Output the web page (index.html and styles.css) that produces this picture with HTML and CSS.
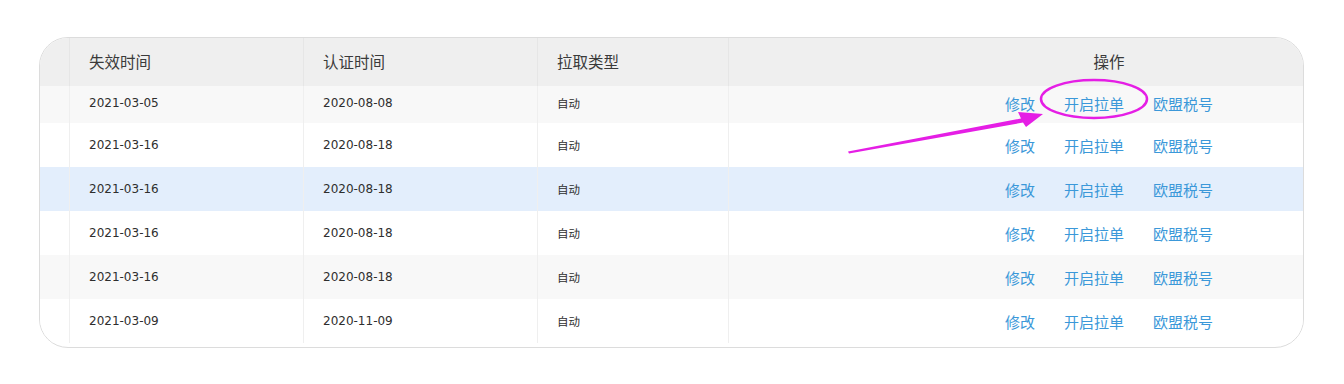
FILE: index.html
```html
<!DOCTYPE html>
<html lang="zh-CN">
<head>
<meta charset="utf-8">
<title>拉单列表</title>
<link rel="stylesheet" href="styles.css">
</head>
<body>
<div class="stage">
  <div class="card">
    <div class="row head">
      <div class="cell sel"></div>
      <div class="cell">失效时间</div>
      <div class="cell">认证时间</div>
      <div class="cell">拉取类型</div>
      <div class="cell ops">操作</div>
    </div>
    <div class="row r1 alt">
      <div class="cell sel"></div>
      <div class="cell">2021-03-05</div>
      <div class="cell">2020-08-08</div>
      <div class="cell type">自动</div>
      <div class="cell ops"><a>修改</a><a>开启拉单</a><a>欧盟税号</a></div>
    </div>
    <div class="row">
      <div class="cell sel"></div>
      <div class="cell">2021-03-16</div>
      <div class="cell">2020-08-18</div>
      <div class="cell type">自动</div>
      <div class="cell ops"><a>修改</a><a>开启拉单</a><a>欧盟税号</a></div>
    </div>
    <div class="row hover">
      <div class="cell sel"></div>
      <div class="cell">2021-03-16</div>
      <div class="cell">2020-08-18</div>
      <div class="cell type">自动</div>
      <div class="cell ops"><a>修改</a><a>开启拉单</a><a>欧盟税号</a></div>
    </div>
    <div class="row">
      <div class="cell sel"></div>
      <div class="cell">2021-03-16</div>
      <div class="cell">2020-08-18</div>
      <div class="cell type">自动</div>
      <div class="cell ops"><a>修改</a><a>开启拉单</a><a>欧盟税号</a></div>
    </div>
    <div class="row alt">
      <div class="cell sel"></div>
      <div class="cell">2021-03-16</div>
      <div class="cell">2020-08-18</div>
      <div class="cell type">自动</div>
      <div class="cell ops"><a>修改</a><a>开启拉单</a><a>欧盟税号</a></div>
    </div>
    <div class="row">
      <div class="cell sel"></div>
      <div class="cell">2021-03-09</div>
      <div class="cell">2020-11-09</div>
      <div class="cell type">自动</div>
      <div class="cell ops"><a>修改</a><a>开启拉单</a><a>欧盟税号</a></div>
    </div>
  </div>
  <svg class="annot" width="1344" height="384" viewBox="0 0 1344 384" xmlns="http://www.w3.org/2000/svg">
    <ellipse cx="1094" cy="99" rx="53" ry="19" fill="none" stroke="#e51ee5" stroke-width="2.5"/>
    <polygon points="848,151.5 1021,118.5 1018,112 1043,114 1026,127 1023,122.5 849,153.5" fill="#e51ee5"/>
  </svg>
</div>
</body>
</html>
```
FILE: styles.css
```css
html, body {
  margin: 0;
  padding: 0;
  background: #ffffff;
}

body {
  font-family: "DejaVu Sans", "Noto Sans CJK SC", sans-serif;
  color: #2e2e2e;
}

.stage {
  position: relative;
  width: 1344px;
  height: 384px;
  padding: 37px 0 0 39px;
  box-sizing: border-box;
}

.card {
  width: 1265px;
  height: 311px;
  box-sizing: border-box;
  border: 1px solid #dcdcdc;
  border-radius: 29px;
  overflow: hidden;
  background: #ffffff;
}

.row {
  display: grid;
  grid-template-columns: 29px 234px 234px 191px 1fr;
  height: 44px;
  background: #ffffff;
}

.row.head {
  height: 48px;
  background: #efefef;
}

.row.r1 {
  height: 37px;
}

.row.alt {
  background: #f8f8f8;
}

.row.hover {
  background: #e3eefc;
}

.cell {
  display: flex;
  align-items: center;
  padding-left: 19px;
  border-left: 1px solid #efefef;
  font-size: 12px;
  color: #2e2e2e;
  white-space: nowrap;
}

.head .cell {
  font-family: "Noto Sans CJK SC", sans-serif;
  font-size: 15.5px;
  color: #3a3a3a;
  border-left-color: #e6e6e6;
  padding-bottom: 2px;
}

.r1 .cell {
  padding-bottom: 3px;
}

.cell.sel {
  border-left: none;
  padding-left: 0;
}

.cell.type {
  font-family: "Noto Sans CJK SC", sans-serif;
  font-size: 11.5px;
}

.cell.ops {
  justify-content: center;
  padding-left: 186px;
  gap: 29px;
}

.cell.ops a {
  font-family: "Noto Sans CJK SC", sans-serif;
  font-size: 15px;
  color: #3b98d9;
  text-decoration: none;
}

.annot {
  position: absolute;
  left: 0;
  top: 0;
  pointer-events: none;
}
```
